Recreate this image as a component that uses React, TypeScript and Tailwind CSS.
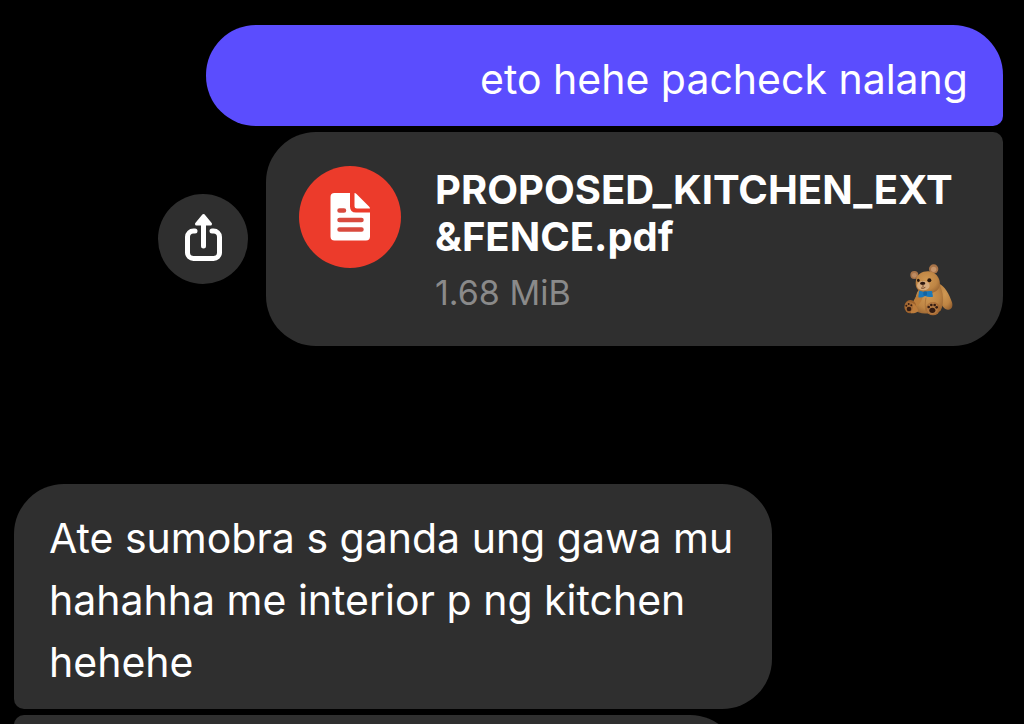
import { ReactNode } from 'react';

const ShareIcon = () => (
  <svg viewBox="0 0 90 90" className="h-full w-full" aria-hidden="true">
    <path
      d="M37 37h-1.500a6 6 0 0 0-6 6v15.500a6 6 0 0 0 6 6h20a6 6 0 0 0 6-6v-15.500a6 6 0 0 0-6-6h-1.500M45.500 30v22"
      fill="none"
      stroke="#fff"
      strokeWidth="5"
      strokeLinecap="round"
    />
    <path
      d="M45.500 21.500l7 8.500h-14z"
      fill="#fff"
      stroke="#fff"
      strokeWidth="3"
      strokeLinejoin="round"
    />
  </svg>
);

const DocumentIcon = () => (
  <svg viewBox="0 0 102 102" className="h-full w-full" aria-hidden="true">
    <path
      d="M35.500 27H51v13.500q0 6 6 6h14V70.500q0 4-4 4H35.500q-4 0-4-4V31q0-4 4-4z"
      fill="#fff"
    />
    <path d="M55.500 27q1 0 2 1L70 40.500q1 1 1 2H58q-2.500 0-2.500-2.500z" fill="#fff" />
    <path
      d="M40.500 44.500h4.500M40.500 54h22M40.500 63.500h22"
      fill="none"
      stroke="#d94a3e"
      strokeWidth="4.500"
      strokeLinecap="round"
    />
  </svg>
);

const TeddyBear = () => (
  <svg
    viewBox="42 42 156 156"
    className="h-[52px] w-[52px] shrink-0"
    role="img"
    aria-label="Teddy bear"
  >
    <defs>
      <radialGradient id="fur" cx="45%" cy="40%" r="70%">
        <stop offset="0" stopColor="#cf9853" />
        <stop offset="0.600" stopColor="#be8544" />
        <stop offset="1" stopColor="#935f2f" />
      </radialGradient>
    </defs>
    {/* far arm */}
    <path
      d="M149 101c17 4 33 33 40 56 4 13-2 24-13 22-15-3-23-21-27-42z"
      fill="url(#fur)"
    />
    {/* body */}
    <path
      d="M88 121c-11 17-13 46-4 64 16 8 55 8 71-3 12-24 8-56-4-79z"
      fill="url(#fur)"
    />
    <path d="M91 130c-9 7-15 17-20 28l13 12c10-9 17-24 19-37z" fill="#bb7d3b" />
    <path d="M111 143c-3 13-3 27 0 40" fill="none" stroke="#a06a35" strokeWidth="2" />
    {/* ears */}
    <circle cx="76" cy="75" r="12" fill="#a87449" />
    <circle cx="76" cy="76" r="7" fill="#bd8b62" />
    <circle cx="134" cy="57" r="14" fill="#a87449" />
    <circle cx="134" cy="58" r="8" fill="#c6946a" />
    {/* head */}
    <path
      d="M81 90c3-20 25-29 44-25 20 5 31 24 27 43-5 18-25 25-46 21-22-4-29-19-25-39z"
      fill="url(#fur)"
    />
    <ellipse cx="103" cy="107" rx="19" ry="14" fill="#d6ab7d" />
    <ellipse cx="88" cy="91" rx="4" ry="5" fill="#24140d" />
    <ellipse cx="121" cy="91" rx="6" ry="6" fill="#24140d" />
    <ellipse cx="101" cy="100" rx="8" ry="5" fill="#2b1710" />
    <path d="M102 104v8m-6 2q7 3 13-2" fill="none" stroke="#75482a" strokeWidth="3" />
    {/* bow tie */}
    <path
      d="M90 122q8 1 16 5 10-5 23-4l3 17q-13 3-24-2-9 6-20 4z"
      fill="#1b78b9"
    />
    <rect x="103" y="124" width="11" height="13" rx="4" fill="#1463a0" />
    {/* feet */}
    <ellipse cx="64" cy="170" rx="18" ry="20" fill="#9c612c" />
    <path d="M62 157q18 1 26 25-7 9-22 8z" fill="#bc7c3c" />
    <ellipse cx="60" cy="170" rx="12" ry="15" fill="#a86d37" />
    <ellipse cx="60" cy="177" rx="7" ry="7" fill="#341c12" />
    <circle cx="52" cy="167" r="3" fill="#341c12" />
    <circle cx="59" cy="162" r="3" fill="#341c12" />
    <circle cx="67" cy="166" r="3" fill="#341c12" />
    <ellipse cx="132" cy="176" rx="21" ry="20" fill="#a76a33" />
    <ellipse cx="130" cy="175" rx="17" ry="18" fill="#b47a42" />
    <ellipse cx="130" cy="181" rx="9" ry="8" fill="#341c12" />
    <circle cx="119" cy="171" r="4" fill="#341c12" />
    <circle cx="127" cy="165" r="4" fill="#341c12" />
    <circle cx="137" cy="165" r="4" fill="#341c12" />
    <circle cx="143" cy="172" r="4" fill="#341c12" />
  </svg>
);

const SentMessage = ({ children }: { children: ReactNode }) => (
  <div className="w-[797px] max-w-full self-end rounded-[50px] rounded-br-[10px] bg-[#5b4dfe] pt-[23px] pr-[35px] pb-4 pl-9 text-right">
    <p className="text-[41px] leading-[62px]">{children}</p>
  </div>
);

const ReceivedMessage = ({ children }: { children: ReactNode }) => (
  <div className="w-[758px] max-w-full rounded-[50px] rounded-bl-[10px] bg-[#2f2f2f] px-[35px] pt-[23px] pb-4">
    <p className="text-[41px] leading-[62px]">{children}</p>
  </div>
);

const FileMessage = () => (
  <div className="flex items-center justify-end gap-[18px]">
    <button
      type="button"
      aria-label="Share"
      className="h-[90px] w-[90px] shrink-0 rounded-full bg-[#2f2f2f]"
    >
      <ShareIcon />
    </button>
    <a
      href="#file"
      className="flex w-[737px] gap-[34px] rounded-[50px] rounded-tr-[10px] bg-[#2f2f2f] pt-[34px] pr-10 pb-[30px] pl-[33px]"
    >
      <span className="h-[102px] w-[102px] shrink-0 rounded-full bg-[#ec3b2b]">
        <DocumentIcon />
      </span>
      <span className="flex min-w-0 flex-1 flex-col gap-1">
        <span className="text-[40px] leading-[47px] font-bold whitespace-nowrap">
          PROPOSED_KITCHEN_EXT
          <br />
          &amp;FENCE.pdf
        </span>
        <span className="flex items-end justify-between pr-2">
          <span className="text-[34px] leading-[46px] text-[#8a8a8a]">1.68 MiB</span>
          <TeddyBear />
        </span>
      </span>
    </a>
  </div>
);

const App = () => {
  return (
    <main className="flex h-screen flex-col overflow-hidden bg-black pt-[25px] pr-[21px] pl-[14px] font-['Inter',sans-serif] text-white">
      <section className="flex shrink-0 flex-col gap-[6px]">
        <SentMessage>eto hehe pacheck nalang</SentMessage>
        <FileMessage />
      </section>
      <section className="mt-[138px] flex shrink-0 flex-col gap-[6px]">
        <ReceivedMessage>
          Ate sumobra s ganda ung gawa mu hahahha me interior p ng kitchen hehehe
        </ReceivedMessage>
        {/* next message, cut off by the bottom of the chat */}
        <div className="h-[100px] w-[726px] max-w-full rounded-[50px] rounded-tl-[10px] bg-[#2f2f2f]" />
      </section>
    </main>
  );
};

export default App;
